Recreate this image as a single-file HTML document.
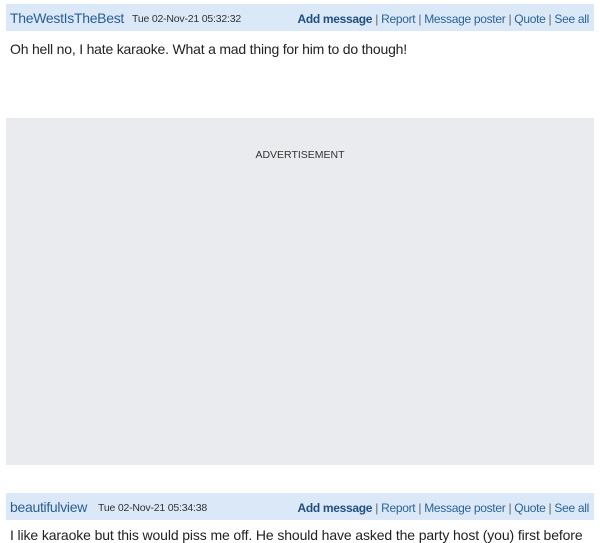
<!DOCTYPE html>
<html><head><style>
body{margin:0;width:600px;height:536px;overflow:hidden;background:#fff;font-family:"Liberation Sans",Arial,sans-serif;position:relative}
.bar{position:absolute;left:6px;width:588px;height:27px;background:#dbe8f8}
.name{position:absolute;left:4px;top:6px;font-size:14px;color:#2a5f93;letter-spacing:-0.3px}
.date{position:absolute;top:9px;font-size:10.5px;color:#333;letter-spacing:-0.2px}
.links{position:absolute;right:5px;top:8px;font-size:12px;color:#2a6496;letter-spacing:-0.3px}
.links b{color:#1f4f7f}
.links span{color:#666}
.txt{position:absolute;left:10px;font-size:14px;color:#222;letter-spacing:-0.2px;white-space:nowrap}
.ad{position:absolute;left:6px;top:118px;width:588px;height:347px;background:#e9ebee}
.ad div{position:absolute;top:31px;width:100%;text-align:center;font-size:10.5px;color:#333}
</style></head><body>
<div class="bar" style="top:4px"><span class="name">TheWestIsTheBest</span><span class="date" style="left:126px">Tue 02-Nov-21 05:32:32</span><span class="links"><b>Add message</b> <span>|</span> Report <span>|</span> Message poster <span>|</span> Quote <span>|</span> See all</span></div>
<div class="txt" style="top:41px">Oh hell no, I hate karaoke. What a mad thing for him to do though!</div>
<div class="ad"><div>ADVERTISEMENT</div></div>
<div class="bar" style="top:493px"><span class="name">beautifulview</span><span class="date" style="left:92px">Tue 02-Nov-21 05:34:38</span><span class="links"><b>Add message</b> <span>|</span> Report <span>|</span> Message poster <span>|</span> Quote <span>|</span> See all</span></div>
<div class="txt" style="top:527px;letter-spacing:-0.12px">I like karaoke but this would piss me off. He should have asked the party host (you) first before</div>
</body></html>
